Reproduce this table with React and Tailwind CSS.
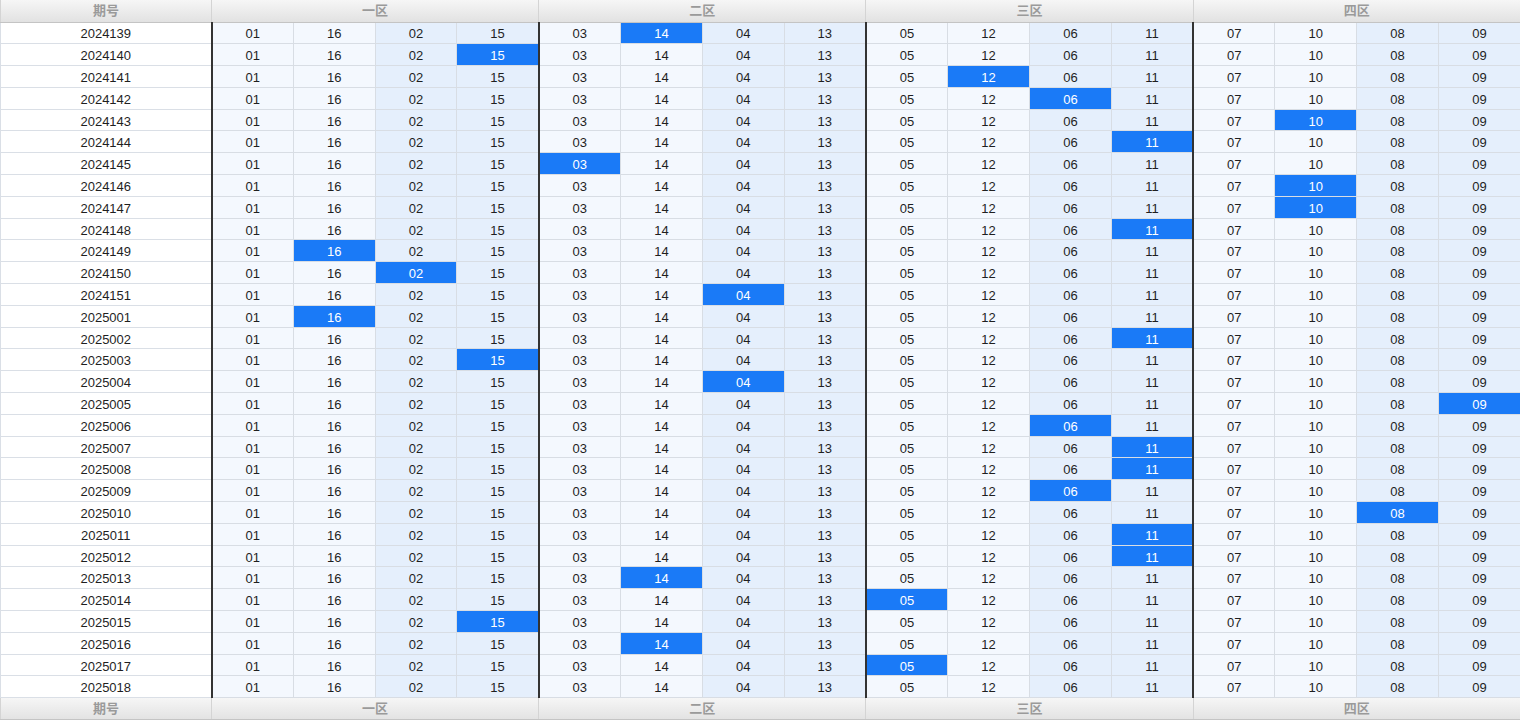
import React from 'react';

const ZONES = [
  { name: '一区', nums: ['01', '16', '02', '15'] },
  { name: '二区', nums: ['03', '14', '04', '13'] },
  { name: '三区', nums: ['05', '12', '06', '11'] },
  { name: '四区', nums: ['07', '10', '08', '09'] },
];

// issue number -> highlighted column (0..15), -1 for none
const ROWS = [
  ['2024139', 5], ['2024140', 3], ['2024141', 9], ['2024142', 10], ['2024143', 13],
  ['2024144', 11], ['2024145', 4], ['2024146', 13], ['2024147', 13], ['2024148', 11],
  ['2024149', 1], ['2024150', 2], ['2024151', 6], ['2025001', 1], ['2025002', 11],
  ['2025003', 3], ['2025004', 6], ['2025005', 15], ['2025006', 10], ['2025007', 11],
  ['2025008', 11], ['2025009', 10], ['2025010', 14], ['2025011', 11], ['2025012', 11],
  ['2025013', 5], ['2025014', 8], ['2025015', 3], ['2025016', 5], ['2025017', 8],
  ['2025018', -1],
];

function HeaderRow() {
  return (
    <tr className="h-[22px] bg-gradient-to-b from-[#f6f6f6] to-[#e2e2e2] text-[#9a9a9a] font-bold">
      <td className="border-x border-[#d4d4d4] border-b border-b-[#c4c4c4] text-center">期号</td>
      {ZONES.map((z) => (
        <td key={z.name} colSpan={4} className="border-x border-[#d4d4d4] border-b border-b-[#c4c4c4] text-center">
          {z.name}
        </td>
      ))}
    </tr>
  );
}

export default function App() {
  return (
    <div className="w-[1520px] h-[720px] overflow-hidden bg-white font-['Liberation_Sans',Arial,'Noto_Sans_CJK_SC',sans-serif] text-[13px]">
      <table className="w-[1520px] table-fixed border-collapse">
        <colgroup>
          <col className="w-[211px]" />
          {Array.from({ length: 16 }).map((_, i) => (
            <col key={i} className="w-[81.8px]" />
          ))}
        </colgroup>
        <thead>
          <HeaderRow />
        </thead>
        <tbody>
          {ROWS.map(([issue, hit]) => (
            <tr key={issue} className="h-[21.8px] text-[#1f1f1f] leading-[17px]">
              <td className="text-center p-0 pt-[2px] border border-[#dadfe6] border-r-2 border-r-[#333] bg-white">{issue}</td>
              {ZONES.map((z, zi) =>
                z.nums.map((n, ci) => {
                  const idx = zi * 4 + ci;
                  const on = idx === hit;
                  const bg = on ? 'bg-[#1a7af7] text-white' : ci < 2 ? 'bg-[#f4f8fe]' : 'bg-[#e5effc]';
                  const right = ci === 3 && zi < 3 ? 'border-r-2 border-r-[#333]' : '';
                  return (
                    <td key={idx} className={`text-center p-0 pt-[2px] border border-[#d8dde4] ${bg} ${right}`}>
                      {n}
                    </td>
                  );
                })
              )}
            </tr>
          ))}
        </tbody>
        <tfoot>
          <HeaderRow />
        </tfoot>
      </table>
    </div>
  );
}
